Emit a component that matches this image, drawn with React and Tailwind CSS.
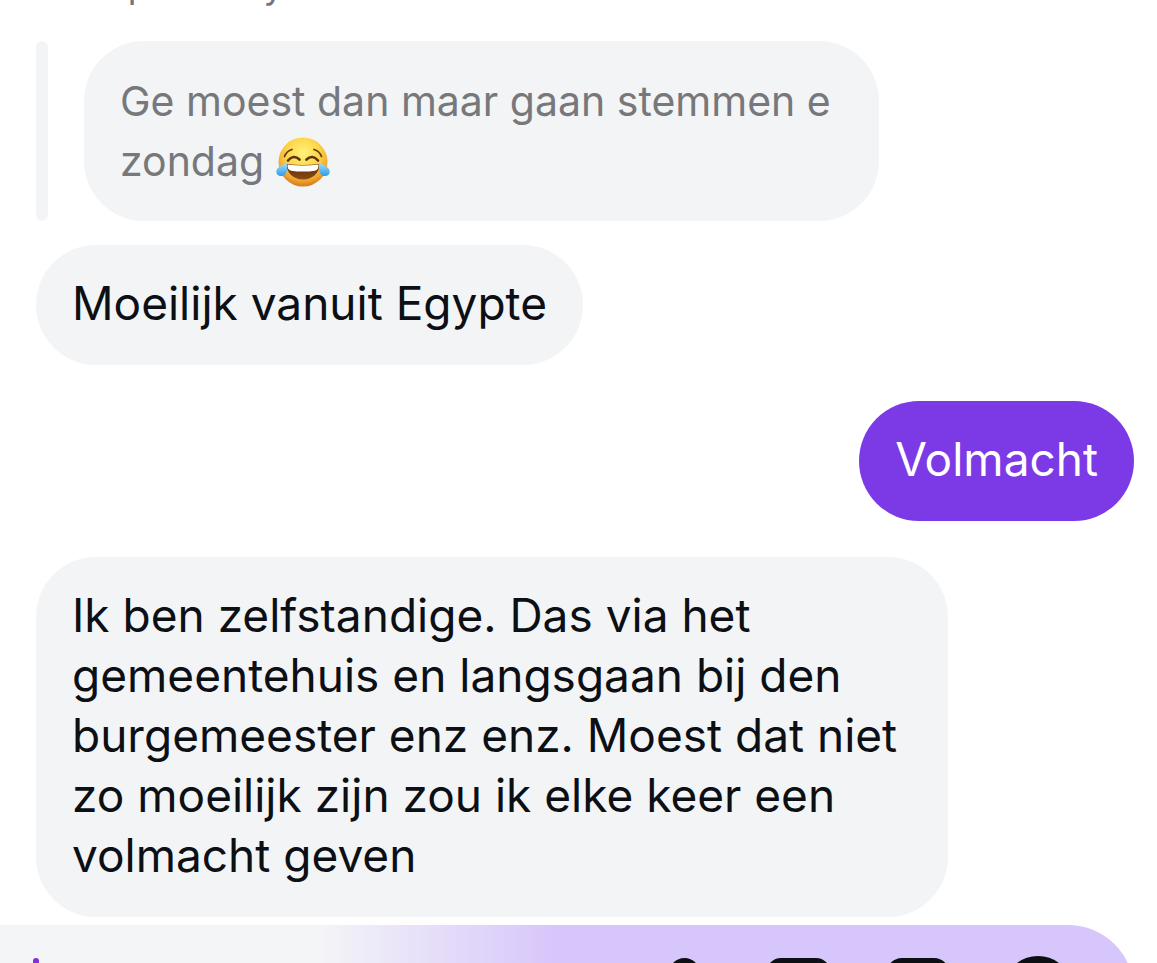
const MESSAGE = "rounded-[60px] bg-[#f3f4f6] px-9 pt-7 pb-8 text-[46px] leading-[60px] text-[#0c0f14]";

function JoyEmoji() {
  return (
    <svg viewBox="0 0 54 54" className="inline-block size-[54px] align-[-12px]" role="img" aria-label="😂">
      <defs>
        <radialGradient id="face" cx="50%" cy="32%" r="68%">
          <stop offset="0" stopColor="#fff27a" />
          <stop offset="0.5" stopColor="#fcd548" />
          <stop offset="0.82" stopColor="#f0a52f" />
          <stop offset="1" stopColor="#d4791c" />
        </radialGradient>
        <linearGradient id="mouth" x1="0" y1="0" x2="0" y2="1">
          <stop offset="0" stopColor="#5a2a0c" />
          <stop offset="1" stopColor="#8a4a14" />
        </linearGradient>
        <linearGradient id="tear" x1="0" y1="0" x2="0" y2="1">
          <stop offset="0" stopColor="#a6e0fb" />
          <stop offset="1" stopColor="#2f9be8" />
        </linearGradient>
      </defs>
      <circle cx="27" cy="28" r="24.5" fill="url(#face)" />
      <path d="M8.500 22.500q2-5.500 7.500-7M45.500 22.500q-2-5.500-7.500-7" fill="none" stroke="#6b3d10" strokeWidth="1.800" strokeLinecap="round" />
      <path d="M12 26.500q5.500-6.500 11.500-1M42 26.500q-5.500-6.500-11.500-1" fill="none" stroke="#5c320c" strokeWidth="2.600" strokeLinecap="round" />
      <path d="M10.500 30q16.500 2 33 0c0 8.500-6.500 15.500-16.500 15.500S10.500 38.500 10.500 30z" fill="url(#mouth)" />
      <path d="M11.500 30.500q15.500 2 31 0c.3 3.500-1 5.600-3.500 6.200q-12 1.800-24 0c-2.500-.6-3.800-2.700-3.500-6.200z" fill="#fff" />
      <path d="M10.500 28.500c1.500 6 .5 13.500-5.500 13.500-4.500 0-6-4.500-3.500-7.500 2-2.500 6-3.500 9-6zM43.500 28.500c-1.500 6-.5 13.500 5.500 13.500 4.500 0 6-4.500 3.500-7.500-2-2.500-6-3.500-9-6z" fill="url(#tear)" />
    </svg>
  );
}

function ComposerButton({ label, children }) {
  return (
    <button type="button" aria-label={label} className="size-[72px] text-[#0c0f14]">
      <svg viewBox="0 0 72 72" className="size-full" fill="none" stroke="currentColor" strokeWidth="7" strokeLinecap="round" strokeLinejoin="round">
        {children}
      </svg>
    </button>
  );
}

export default function App() {
  return (
    <div className="flex h-screen flex-col overflow-hidden bg-white font-['Inter',sans-serif]">
      <main className="-mt-10 flex shrink-0 flex-col items-start pr-[23px] pl-9">
        <p className="pl-12 text-[36px] leading-[50px] text-[#73757c]">Replied to you</p>
        <div className="mt-[31px] flex gap-9">
          <div className="w-3 shrink-0 rounded-full bg-[#f3f4f6]" />
          <blockquote className="max-w-[795px] rounded-[60px] bg-[#f3f4f6] px-9 py-[30px] text-[41px] leading-[60px] text-[#77787b]">
            Ge moest dan maar gaan stemmen e zondag <JoyEmoji />
          </blockquote>
        </div>
        <p className={MESSAGE + " mt-6"}>Moeilijk vanuit Egypte</p>
        <p className="mt-9 self-end rounded-[60px] bg-[#7c3ae6] px-9 pt-7 pb-8 text-[46px] leading-[60px] text-white">Volmacht</p>
        <p className={MESSAGE + " mt-9 max-w-[912px]"}>
          Ik ben zelfstandige. Das via het gemeentehuis en langsgaan bij den burgemeester enz enz. Moest dat niet zo moeilijk zijn zou ik elke keer een volmacht geven
        </p>
      </main>
      <footer className="mt-2 mr-[23px] flex h-[132px] shrink-0 items-center justify-end gap-12 rounded-r-full bg-linear-to-r from-[#f4f5f7] from-28% via-[#d7c6fb] via-49% to-[#d7c6fb] pr-[60px]">
        <span className="mr-auto ml-[33px] h-[66px] w-[6px] rounded-full bg-[#8030dc]" />
        <ComposerButton label="Voice message">
          <rect x="30.500" y="6.500" width="24" height="38" rx="12" />
          <path d="M18 34a24 24 0 0 0 48 0M42 58v10" />
        </ComposerButton>
        <ComposerButton label="Photo">
          <rect x="8" y="6.500" width="57" height="57" rx="11" />
        </ComposerButton>
        <ComposerButton label="Sticker">
          <rect x="8" y="6.500" width="56" height="57" rx="12" />
        </ComposerButton>
        <ComposerButton label="More">
          <circle cx="36" cy="36" r="31.500" />
          <path d="M36 22v28M22 36h28" />
        </ComposerButton>
      </footer>
    </div>
  );
}
